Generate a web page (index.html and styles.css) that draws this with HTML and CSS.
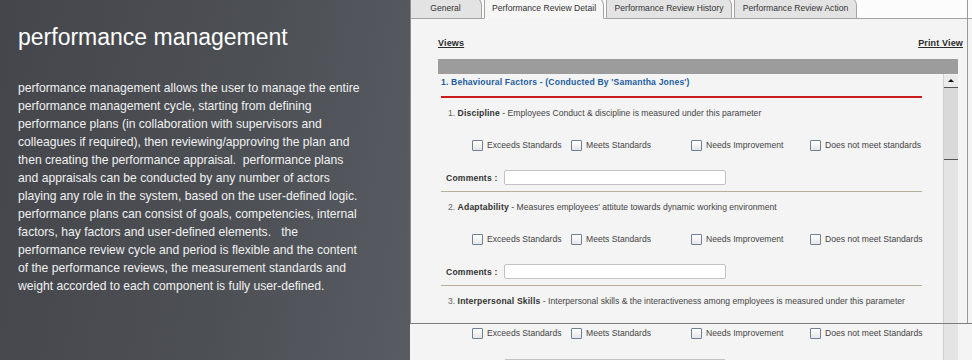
FILE: index.html
```html
<!DOCTYPE html>
<html lang="en">
<head>
  <meta charset="UTF-8" />
  <title>performance management</title>
  <link rel="stylesheet" href="styles.css">
</head>
<body>

  <div class="intro">
    <h1>performance management</h1>
    <p>performance management allows the user to manage the entire performance management cycle, starting from defining performance plans (in collaboration with supervisors and colleagues if required), then reviewing/approving the plan and then creating the performance appraisal.&nbsp; performance plans and appraisals can be conducted by any number of actors playing any role in the system, based on the user-defined logic. performance plans can consist of goals, competencies, internal factors, hay factors and user-defined elements.&nbsp;&nbsp; the performance review cycle and period is flexible and the content of the performance reviews, the measurement standards and weight accorded to each component is fully user-defined.</p>
  </div>

  <div class="shot">
    <div class="tabs">
      <div class="tab tab-general">General</div>
      <div class="tab tab-active tab-detail">Performance Review Detail</div>
      <div class="tab tab-history">Performance Review History</div>
      <div class="tab tab-action">Performance Review Action</div>
    </div>

    <div class="toolbar">
      <a class="link">Views</a>
      <a class="link">Print View</a>
    </div>

    <div class="grid-head"></div>

    <div class="panel">
      <div class="content">
        <div class="section-title">1. Behavioural Factors - (Conducted By 'Samantha Jones')</div>
        <div class="red-line"></div>

        <div class="item"><span class="num">1.</span> <b>Discipline</b> - Employees Conduct &amp; discipline is measured under this parameter</div>
        <div class="checks">
          <label><span class="box"></span>Exceeds Standards</label>
          <label><span class="box"></span>Meets Standards</label>
          <label><span class="box"></span>Needs Improvement</label>
          <label><span class="box"></span>Does not meet standards</label>
        </div>
        <div class="comments"><b>Comments :</b><span class="field"></span></div>
        <div class="sep"></div>

        <div class="item"><span class="num">2.</span> <b>Adaptability</b> - Measures employees' attitute towards dynamic working environment</div>
        <div class="checks">
          <label><span class="box"></span>Exceeds Standards</label>
          <label><span class="box"></span>Meets Standards</label>
          <label><span class="box"></span>Needs Improvement</label>
          <label><span class="box"></span>Does not meet Standards</label>
        </div>
        <div class="comments"><b>Comments :</b><span class="field"></span></div>
        <div class="sep"></div>

        <div class="item"><span class="num">3.</span> <b>Interpersonal Skills</b> - Interpersonal skills &amp; the interactiveness among employees is measured under this parameter</div>
        <div class="checks">
          <label><span class="box"></span>Exceeds Standards</label>
          <label><span class="box"></span>Meets Standards</label>
          <label><span class="box"></span>Needs Improvement</label>
          <label><span class="box"></span>Does not meet Standards</label>
        </div>
        <div class="comments comments-cut"><span class="field"></span></div>
      </div>

      <div class="scrollbar">
        <div class="arrow"></div>
        <div class="thumb"></div>
        <div class="track"></div>
      </div>
    </div>
  </div>

</body>
</html>
```

FILE: styles.css
```css
body {
  margin: 0;
  width: 972px;
  height: 360px;
  overflow: hidden;
  display: flex;
  font-family: 'Liberation Sans', Arial, sans-serif;
}

/* left text column */
.intro {
  width: 410px;
  flex: none;
  padding: 23px 0 0 18px;
  box-sizing: border-box;
  color: #f1f1f1;
  background: linear-gradient(100deg, #44464b 0%, #4c4f54 55%, #585c62 100%);
}

.intro h1 {
  margin: 0;
  font-size: 23px;
  font-weight: normal;
  line-height: 28px;
  color: #fff;
}

.intro p {
  margin: 28px 0 0;
  width: 344px;
  font-size: 12.15px;
  line-height: 18px;
}

/* app screenshot */
.shot {
  flex: 1;
  position: relative;
  overflow: hidden;
  background: #f4f4f4;
  font-size: 8.6px;
  color: #444;
}

.shot b {
  letter-spacing: 0.18px;
}

.shot::before {
  content: "";
  position: absolute;
  left: 0;
  top: 0;
  width: 556px;
  height: 323px;
  border-left: 1px solid #8c8c8c;
  border-right: 1px solid #9a9a9a;
  pointer-events: none;
}

.shot::after {
  content: "";
  position: absolute;
  left: 0;
  right: 0;
  top: 323px;
  border-top: 1px solid #7c7c7c;
}

.tabs {
  display: flex;
  gap: 2px;
  height: 19px;
  background: #fcfcfc;
  border-bottom: 1px solid #a4a4a4;
  box-sizing: border-box;
  align-items: flex-end;
}

.tab {
  height: 22px;
  box-sizing: border-box;
  margin-bottom: -1px;
  padding-top: 5px;
  background: #e3e3e3;
  border: 1px solid #a4a4a4;
  border-radius: 0 8px 0 0;
  text-align: center;
  color: #333;
}

.tab-general { width: 72px; border-left: none; }
.tab-detail { width: 120px; }
.tab-history { width: 126px; }
.tab-action { width: 123px; }

.tab-active {
  background: #f6f6f6;
  border-bottom-color: #f6f6f6;
}

.toolbar {
  display: flex;
  justify-content: space-between;
  padding: 19px 9px 0 28px;
  height: 40px;
  box-sizing: border-box;
}

.link {
  font-weight: bold;
  text-decoration: underline;
  color: #2c2c2c;
  font-size: 9px;
  letter-spacing: 0.15px;
}

.grid-head {
  margin-left: 28px;
  width: 520px;
  height: 15px;
  background: #9c9c9c;
}

.panel {
  display: flex;
  margin-left: 28px;
  width: 520px;
}

.content {
  flex: 1;
  padding-left: 3px;
}

.section-title {
  height: 17px;
  line-height: 17px;
  font-weight: bold;
  letter-spacing: 0.18px;
  color: #1d5d9e;
}

.red-line {
  margin-top: 5px;
  width: 481px;
  height: 2px;
  background: #cc1b1b;
}

.item {
  margin-top: 6px;
  height: 18px;
  line-height: 18px;
  padding-left: 7px;
}

.item .num { color: #666; }
.item b { color: #333; }

.checks {
  margin-top: 14px;
  height: 18px;
  display: grid;
  grid-template-columns: 99px 120px 119px auto;
  padding-left: 31px;
  align-items: center;
}

.checks label {
  display: flex;
  align-items: center;
  gap: 4px;
}

.box {
  width: 11px;
  height: 11px;
  box-sizing: border-box;
  border: 1px solid #6f8196;
  border-radius: 1px;
  background: linear-gradient(#fff, #e6e6e6);
}

.comments {
  margin-top: 16px;
  height: 15px;
  display: flex;
  align-items: center;
  padding-left: 5px;
}

.comments b {
  width: 58px;
  color: #333;
}

.comments-cut {
  margin-top: 17px;
  padding-left: 63px;
}

.field {
  width: 222px;
  height: 15px;
  box-sizing: border-box;
  border: 1px solid #c2c2c2;
  border-radius: 2px;
  background: #fff;
}

.sep {
  margin-top: 6px;
  width: 481px;
  height: 1px;
  background: #b9ae9c;
}

.scrollbar {
  width: 14px;
  display: flex;
  flex-direction: column;
  padding-top: 1px;
  border-left: 1px solid #d0d0d0;
}

.arrow {
  height: 12px;
  background: #eaeaea;
  border-bottom: 1px solid #555;
  position: relative;
}

.arrow::after {
  content: "";
  position: absolute;
  left: 4px;
  top: 4px;
  border-left: 3px solid transparent;
  border-right: 3px solid transparent;
  border-bottom: 3px solid #111;
}

.thumb {
  height: 71px;
  background: #d9d9d9;
  border-bottom: 1px solid #555;
}

.track {
  height: 200px;
  background: #e4e4e4;
}
```
